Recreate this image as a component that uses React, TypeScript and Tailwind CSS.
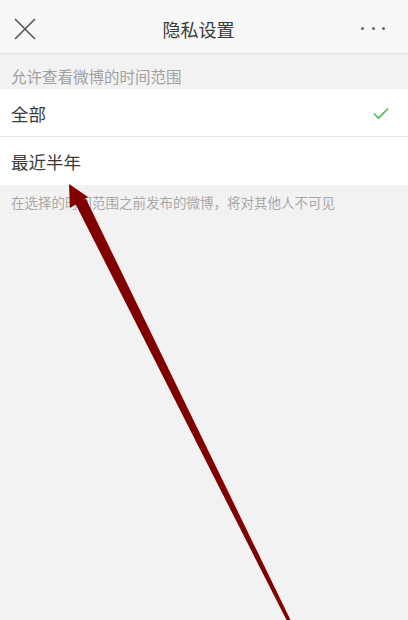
import { Check } from "lucide-react"

const font = { fontFamily: '"Noto Sans CJK SC", "Noto Sans", sans-serif' }

export default function App() {
  return (
    <div className="relative h-[620px] w-full overflow-hidden bg-[#f2f2f2]" style={font}>
      {/* header */}
      <div className="flex h-[54px] items-center justify-between border-b border-[#e2e2e2] bg-[#f8f8f8] px-[14px] pt-[4px]">
        <svg width="22" height="22" viewBox="0 0 22 22" className="text-[#555]">
          <path d="M1 1 L21 21 M21 1 L1 21" stroke="currentColor" strokeWidth="1.6" fill="none" />
        </svg>
        <h1 className="text-[18px] leading-none text-[#3a3a3a]">隐私设置</h1>
        <div className="flex items-center gap-[7.5px] pr-[9px]">
          <span className="h-[3px] w-[3px] rounded-full bg-[#666]" />
          <span className="h-[3px] w-[3px] rounded-full bg-[#666]" />
          <span className="h-[3px] w-[3px] rounded-full bg-[#666]" />
        </div>
      </div>

      {/* section label */}
      <div className="flex h-[35px] items-center px-[11px] pt-[11px] text-[15.5px] leading-none text-[#a0a0a0]">
        允许查看微博的时间范围
      </div>

      {/* options */}
      <div className="bg-white">
        <div className="flex h-[48px] items-center justify-between border-b border-[#e8e8e8] pl-[11px] pr-[17px] pt-[3px]">
          <span className="text-[17.5px] text-[#3a3a3a]">全部</span>
          <Check className="h-[20px] w-[20px] text-[#4cbf4c]" strokeWidth={2} />
        </div>
        <div className="flex h-[48px] items-center pl-[11px] pt-[3px]">
          <span className="text-[17.5px] text-[#3a3a3a]">最近半年</span>
        </div>
      </div>

      <p className="px-[11px] pt-[7px] text-[13.5px] leading-[20px] text-[#a8a8a8]">
        在选择的时间范围之前发布的微博，将对其他人不可见
      </p>

      {/* annotation arrow */}
      <svg className="pointer-events-none absolute left-0 top-0" width="408" height="620" viewBox="0 0 408 620">
        <polygon points="69,184 70,208 88,197" fill="#800000" />
        <polygon points="74,201 86,199 291,621 287,621" fill="#800000" />
      </svg>
    </div>
  )
}
